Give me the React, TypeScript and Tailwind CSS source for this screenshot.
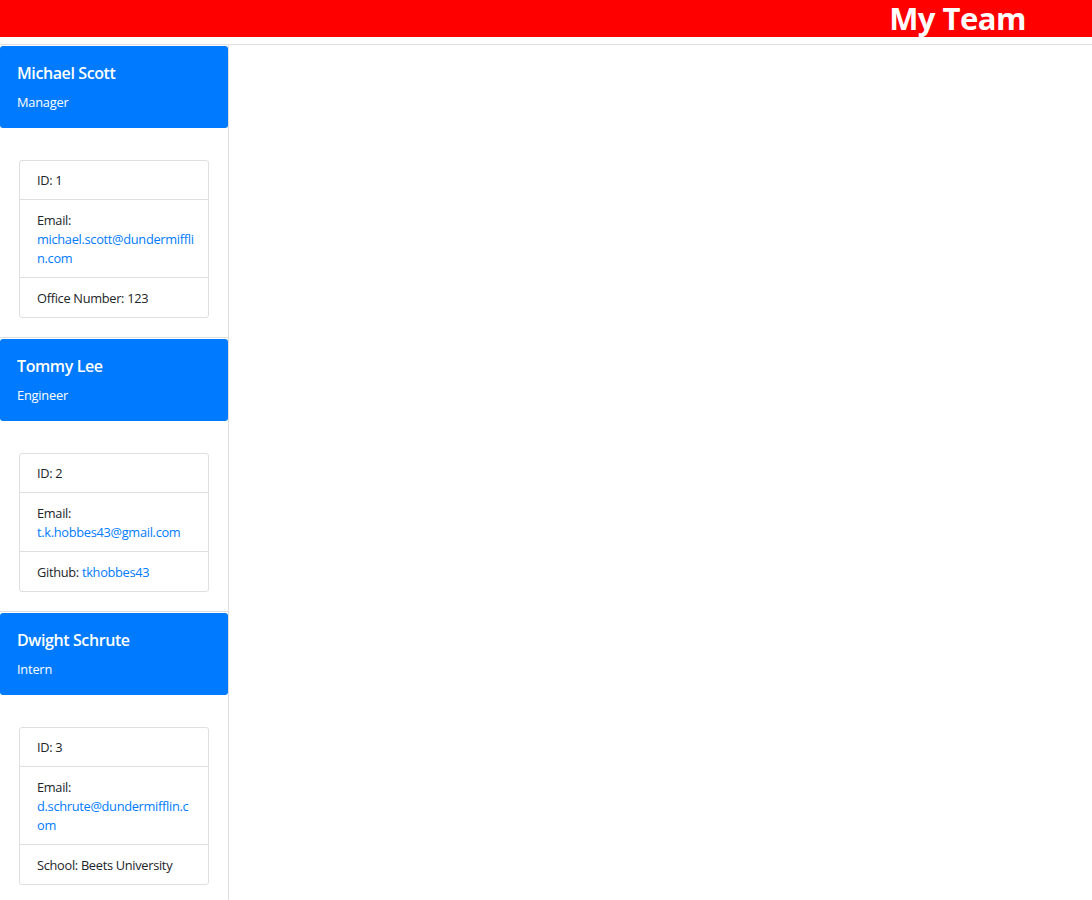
import React from "react";

type Emp = {
  name: string;
  role: string;
  id: number;
  emailLines: string[];
  extra: React.ReactNode;
};

const employees: Emp[] = [
  {
    name: "Michael Scott",
    role: "Manager",
    id: 1,
    emailLines: ["michael.scott@dundermiffli", "n.com"],
    extra: <>Office Number: 123</>,
  },
  {
    name: "Tommy Lee",
    role: "Engineer",
    id: 2,
    emailLines: ["t.k.hobbes43@gmail.com"],
    extra: (
      <>
        Github: <a className="text-[#007bff]">tkhobbes43</a>
      </>
    ),
  },
  {
    name: "Dwight Schrute",
    role: "Intern",
    id: 3,
    emailLines: ["d.schrute@dundermifflin.c", "om"],
    extra: <>School: Beets University</>,
  },
];

function Card({ e }: { e: Emp }) {
  const twoLine = e.emailLines.length > 1;
  return (
    <div className="w-[229px] border-r border-b border-[#dfdfdf] pt-[1px]">
      <div className="h-[82px] rounded-[3px] bg-[#007bff] text-white pl-[17px] pt-[18px] w-[228px]">
        <div className="text-[16px] leading-[19.2px] font-semibold tracking-[-0.4px]">{e.name}</div>
        <div className="mt-[9.6px] text-[12.8px] leading-[19.2px] tracking-[-0.2px]">{e.role}</div>
      </div>
      <div className="pt-[32px] pb-[19px] pl-[19px] pr-[19px]">
        <div className="border border-[#dfdfdf] rounded-[3px] text-[12.8px] leading-[19.2px] text-[#212529] tracking-[-0.3px]">
          <div className="h-[38px] px-[17px] pt-[10px]">ID: {e.id}</div>
          <div
            className={
              twoLine
                ? "h-[78px] px-[17px] pt-[10.6px] border-t border-[#dfdfdf]"
                : "h-[59px] px-[17px] pt-[10.6px] border-t border-[#dfdfdf]"
            }
          >
            <div>Email:</div>
            <a className="block text-[#007bff]">
              {e.emailLines.map((l, i) => (
                <span key={i} className="block">
                  {l}
                </span>
              ))}
            </a>
          </div>
          <div className="h-[40px] px-[17px] pt-[10.6px] border-t border-[#dfdfdf]">{e.extra}</div>
        </div>
      </div>
    </div>
  );
}

export default function App() {
  return (
    <div
      className="min-h-[900px] bg-white"
      style={{ fontFamily: '"Open Sans", "Noto Sans", sans-serif' }}
    >
      <div className="h-[37px] bg-[#ff0000] flex justify-end items-start pr-[66px]">
        <h1 className="text-[31px] leading-[36px] font-bold text-white tracking-[-0.5px]">My Team</h1>
      </div>
      <div className="mt-[7px] border-t border-[#dfdfdf]">
        {employees.map((e) => (
          <Card key={e.id} e={e} />
        ))}
      </div>
    </div>
  );
}
